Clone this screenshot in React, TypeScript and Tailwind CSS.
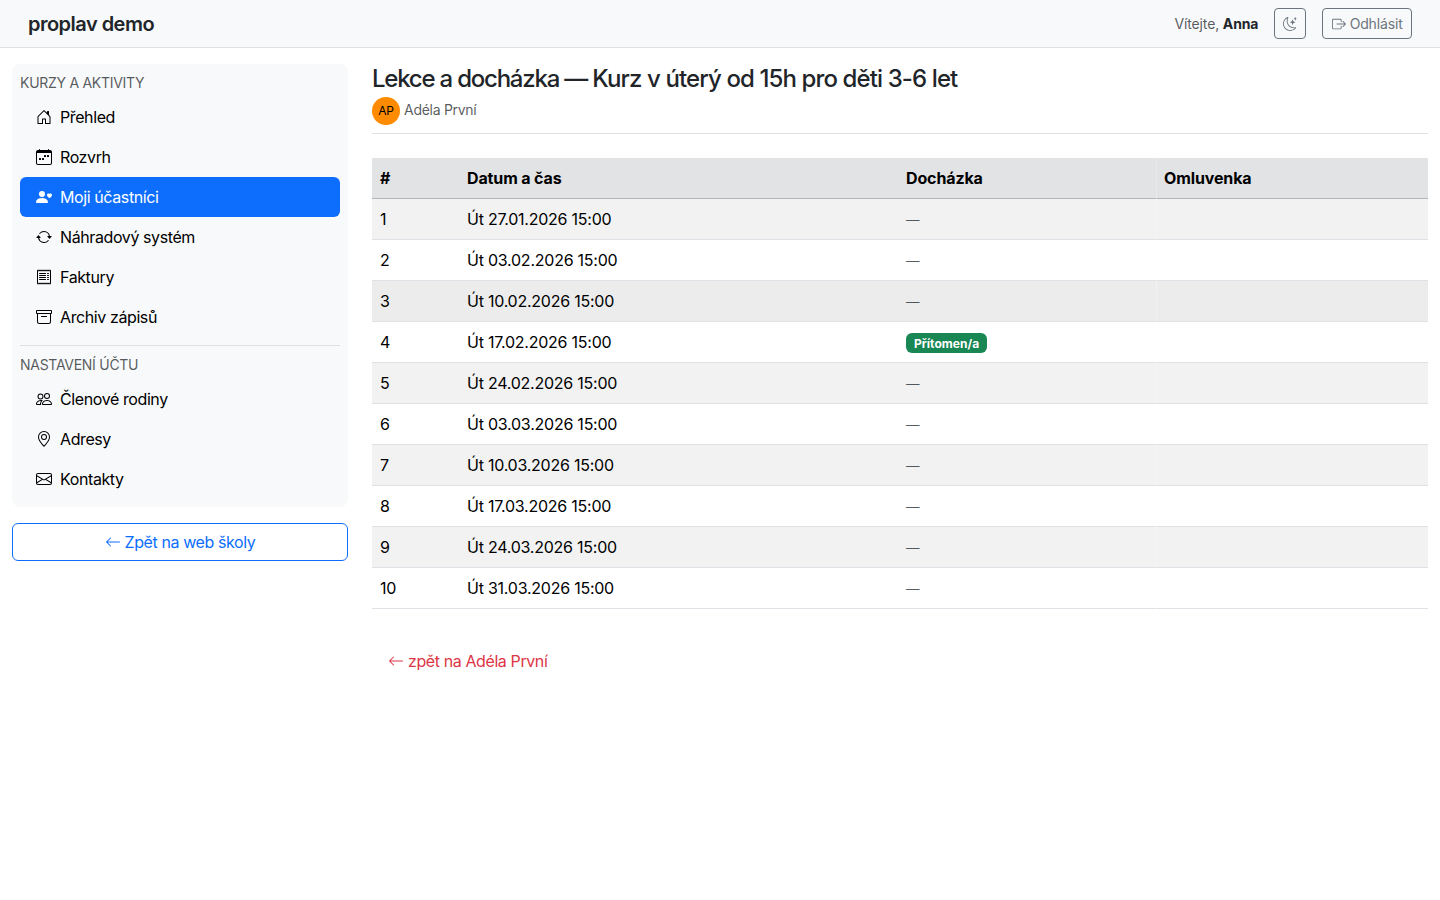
import React from "react";
import type { IconType } from "react-icons";
import {
  BsArchive,
  BsArrowLeft,
  BsArrowRepeat,
  BsBoxArrowRight,
  BsCalendarWeek,
  BsEnvelope,
  BsGeoAlt,
  BsHouseDoor,
  BsMoonStars,
  BsPeople,
  BsPersonHeart,
  BsReceipt,
} from "react-icons/bs";

type NavEntry = { label: string; icon: IconType; active?: boolean };

const courseLinks: NavEntry[] = [
  { label: "Přehled", icon: BsHouseDoor },
  { label: "Rozvrh", icon: BsCalendarWeek },
  { label: "Moji účastníci", icon: BsPersonHeart, active: true },
  { label: "Náhradový systém", icon: BsArrowRepeat },
  { label: "Faktury", icon: BsReceipt },
  { label: "Archiv zápisů", icon: BsArchive },
];

const accountLinks: NavEntry[] = [
  { label: "Členové rodiny", icon: BsPeople },
  { label: "Adresy", icon: BsGeoAlt },
  { label: "Kontakty", icon: BsEnvelope },
];

const lessons = [
  "Út 27.01.2026 15:00",
  "Út 03.02.2026 15:00",
  "Út 10.02.2026 15:00",
  "Út 17.02.2026 15:00",
  "Út 24.02.2026 15:00",
  "Út 03.03.2026 15:00",
  "Út 10.03.2026 15:00",
  "Út 17.03.2026 15:00",
  "Út 24.03.2026 15:00",
  "Út 31.03.2026 15:00",
];

function NavList({ entries }: { entries: NavEntry[] }) {
  return (
    <ul className="flex flex-col">
      {entries.map(({ label, icon: Icon, active }) => (
        <li key={label}>
          <a
            href="#"
            className={`flex h-10 items-center gap-2 rounded-md px-4 ${
              active ? "bg-[#0d6efd] text-white" : "text-black"
            }`}
          >
            <Icon className="size-4 shrink-0" />
            <span>{label}</span>
          </a>
        </li>
      ))}
    </ul>
  );
}

function NavHeading({ children }: { children: React.ReactNode }) {
  return (
    <h6 className="mb-1 text-[14px] leading-[21px] tracking-[-0.02em] text-[#212529]/75 uppercase">
      {children}
    </h6>
  );
}

function rowColor(index: number) {
  if (index === 2) return "bg-[#ececec]";
  return index % 2 === 0 ? "bg-[#f2f2f2]" : "bg-white";
}

export default function App() {
  return (
    <div className="min-h-screen bg-white font-['Inter',sans-serif] text-[16px] leading-6 tracking-[-0.025em] text-[#212529]">
      <header className="flex h-12 items-center justify-between border-b border-[#dee2e6] bg-[#f8f9fa] px-7">
        <a href="#" className="text-[20px] leading-[30px] font-semibold tracking-[-0.026em]">
          proplav demo
        </a>
        <div className="flex items-center gap-4 text-[14px] leading-[21px] tracking-[-0.01em]">
          <span className="text-[#212529]/75">
            Vítejte, <strong className="font-bold text-[#212529]">Anna</strong>
          </span>
          <button className="flex h-[31px] w-8 items-center justify-center rounded-[4px] border border-[#6c757d] text-[#6c757d]">
            <BsMoonStars className="size-3.5" />
          </button>
          <button className="flex h-[31px] w-[89.7px] items-center justify-center gap-1 rounded-[4px] border border-[#6c757d] text-[#6c757d]">
            <BsBoxArrowRight className="size-3.5 shrink-0" />
            <span>Odhlásit</span>
          </button>
        </div>
      </header>

      <div className="flex gap-6 px-3 pt-4">
        <aside className="flex w-[336px] shrink-0 flex-col gap-4">
          <nav className="rounded-lg bg-[#f8f9fa] p-2">
            <NavHeading>Kurzy a aktivity</NavHeading>
            <NavList entries={courseLinks} />
            <hr className="my-2 border-[#dee2e6]" />
            <NavHeading>Nastavení účtu</NavHeading>
            <NavList entries={accountLinks} />
          </nav>
          <a
            href="#"
            className="flex h-[38px] items-center justify-center gap-1 rounded-md border border-[#0d6efd] text-[#0d6efd]"
          >
            <BsArrowLeft className="size-4" />
            <span>Zpět na web školy</span>
          </a>
        </aside>

        <main className="min-w-0 flex-1">
          <div className="border-b border-[#dee2e6] pb-2">
            <h1 className="mb-1 text-[24px] leading-[29px] font-medium tracking-[-0.037em]">
              <span className="tracking-[-0.051em]">Lekce a docházka — </span>
              Kurz v úterý od 15h pro děti 3-6 let
            </h1>
            <div className="flex gap-1">
              <span className="flex size-7 items-center justify-center rounded-full bg-[#ff8c00] text-[12px] leading-none tracking-[-0.02em] text-black">
                AP
              </span>
              <span className="pt-0.5 text-[14px] leading-[21px] tracking-[-0.02em] text-[#212529]/75">
                Adéla První
              </span>
            </div>
          </div>

          <table className="mt-6 w-full table-fixed border-separate border-spacing-0 text-left tracking-[-0.015em] text-black">
            <colgroup>
              <col className="w-[87px]" />
              <col className="w-[439px]" />
              <col className="w-[258px]" />
              <col />
            </colgroup>
            <thead>
              <tr className="h-[41px] bg-[#e2e3e5] tracking-[-0.008em]">
                <th className="border-b border-[#b4b5b7] px-2 font-bold">#</th>
                <th className="border-b border-[#b4b5b7] px-2 font-bold">Datum a čas</th>
                <th className="border-b border-[#b4b5b7] px-2 font-bold">Docházka</th>
                <th className="border-b border-l border-b-[#b4b5b7] border-l-[#e8e9eb] pr-2 pl-[7px] font-bold">
                  Omluvenka
                </th>
              </tr>
            </thead>
            <tbody>
              {lessons.map((date, index) => (
                <tr key={date} className={`h-[41px] ${rowColor(index)}`}>
                  <td className="border-b border-[#dee2e6] px-2">{index + 1}</td>
                  <td className="border-b border-[#dee2e6] px-2">{date}</td>
                  <td className="border-b border-[#dee2e6] px-2">
                    {index === 3 ? (
                      <span className="mb-px inline-flex h-5 items-center rounded-md bg-[#198754] px-2 pt-px align-middle text-[12px] leading-none font-bold tracking-[0.003em] text-white">
                        Přítomen/a
                      </span>
                    ) : (
                      <span className="text-[13.5px] text-[#212529]/75">—</span>
                    )}
                  </td>
                  <td className="border-b border-l border-b-[#dee2e6] border-l-white/25" />
                </tr>
              ))}
            </tbody>
          </table>

          <a href="#" className="mt-10 ml-4 inline-flex items-center gap-1 text-[#dc3545]">
            <BsArrowLeft className="size-4" />
            <span>zpět na Adéla První</span>
          </a>
        </main>
      </div>
    </div>
  );
}
